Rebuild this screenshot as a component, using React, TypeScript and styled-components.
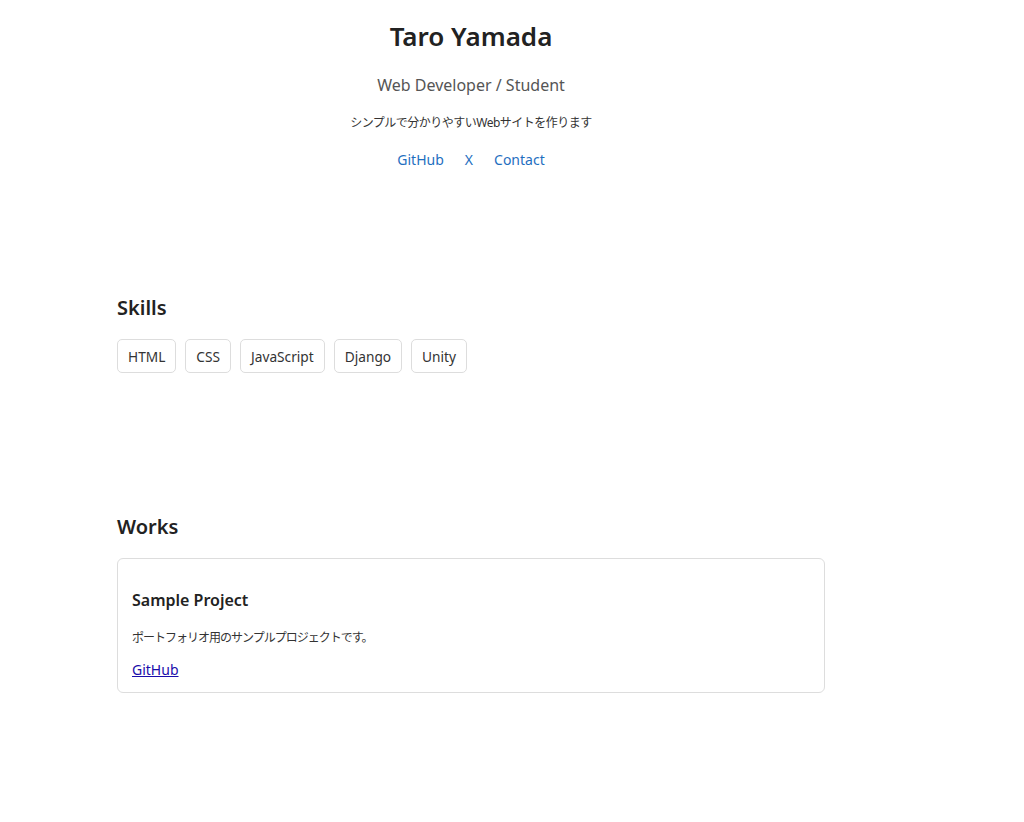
import React from "react";
import styled, { createGlobalStyle } from "styled-components";

const GlobalStyle = createGlobalStyle`
  body {
    margin: 0;
    background: #fff;
    color: #222;
    font-family: "Noto Sans", "Noto Sans CJK JP", sans-serif;
  }
`;

const Page = styled.div`
  width: 708px;
  padding: 20px 0 120px 117px;
`;

const Header = styled.header`
  display: flex;
  flex-direction: column;
  align-items: center;
  text-align: center;
`;

const Name = styled.h1`
  margin: 0;
  font-size: 26px;
  line-height: 32px;
  font-weight: 600;
  color: #222;
`;

const Role = styled.p`
  margin: 21px 0 0;
  font-size: 16px;
  line-height: 24px;
  color: #555;
`;

const Tagline = styled.p`
  margin: 16px 0 0;
  font-size: 12px;
  line-height: 20px;
  letter-spacing: -0.5px;
  color: #333;
`;

const LinkRow = styled.nav`
  display: flex;
  gap: 21px;
  margin-top: 17px;
`;

const NavLink = styled.a`
  font-size: 14px;
  line-height: 20px;
  color: #1f6fbf;
  text-decoration: none;
`;

const Section = styled.section<{ $gap: number }>`
  margin-top: ${({ $gap }) => $gap}px;
`;

const SectionTitle = styled.h2`
  margin: 0 0 17px;
  font-size: 20px;
  line-height: 28px;
  font-weight: 600;
  color: #222;
`;

const TagList = styled.ul`
  display: flex;
  flex-wrap: wrap;
  gap: 9px;
  margin: 0;
  padding: 0;
  list-style: none;
`;

const Tag = styled.li`
  display: flex;
  align-items: center;
  height: 34px;
  box-sizing: border-box;
  padding: 0 10px;
  border: 1px solid #ddd;
  border-radius: 5px;
  font-size: 13.7px;
  color: #333;
`;

const Card = styled.article`
  border: 1px solid #ddd;
  border-radius: 6px;
  padding: 16px 14px 12px;
`;

const CardTitle = styled.h3`
  margin: 13px 0 16px;
  font-size: 16px;
  line-height: 24px;
  font-weight: 600;
  color: #222;
`;

const CardText = styled.p`
  margin: 0 0 10px;
  font-size: 12px;
  line-height: 20px;
  letter-spacing: -1px;
  color: #333;
`;

const CardLink = styled.a`
  font-size: 14px;
  line-height: 20px;
  color: #1a0dab;
  text-decoration: underline;
`;

const skills = ["HTML", "CSS", "JavaScript", "Django", "Unity"];

export default function App() {
  return (
    <>
      <GlobalStyle />
      <Page>
        <Header>
          <Name>Taro Yamada</Name>
          <Role>Web Developer / Student</Role>
          <Tagline>シンプルで分かりやすいWebサイトを作ります</Tagline>
          <LinkRow>
            <NavLink href="#">GitHub</NavLink>
            <NavLink href="#">X</NavLink>
            <NavLink href="#">Contact</NavLink>
          </LinkRow>
        </Header>

        <Section $gap={124}>
          <SectionTitle>Skills</SectionTitle>
          <TagList>
            {skills.map((s) => (
              <Tag key={s}>{s}</Tag>
            ))}
          </TagList>
        </Section>

        <Section $gap={140}>
          <SectionTitle>Works</SectionTitle>
          <Card>
            <CardTitle>Sample Project</CardTitle>
            <CardText>ポートフォリオ用のサンプルプロジェクトです。</CardText>
            <CardLink href="#">GitHub</CardLink>
          </Card>
        </Section>
      </Page>
    </>
  );
}
